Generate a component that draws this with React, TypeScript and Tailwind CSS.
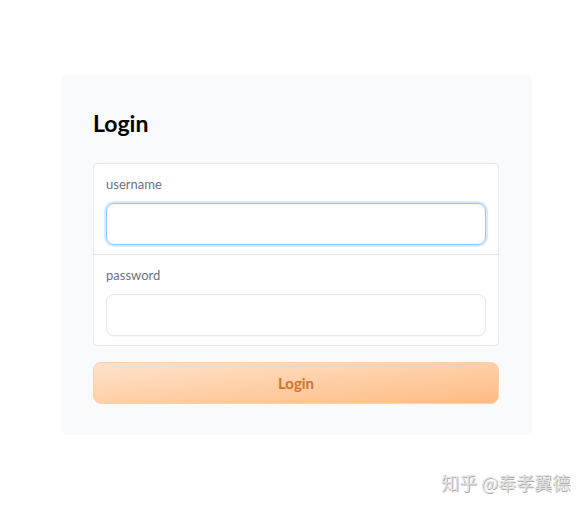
export default function App() {
  return (
    <div
      className="relative w-[584px] h-[507px] bg-white"
      style={{ fontFamily: '"Source Sans Pro", Lato, "Noto Sans", sans-serif' }}
    >
      <div className="pt-[75px] pl-[61px]">
        <div className="w-[471px] h-[360px] rounded-md bg-[#f9fafb] px-8 pt-[31px]">
          <h1 className="text-[23px] font-bold text-black leading-[34px]">Login</h1>
          <div className="mt-[23px] w-[406px] rounded-[4px] border border-[#e5e7eb] bg-white">
            <div className="px-3 pt-[11px] pb-[9px] border-b border-[#e5e7eb]">
              <div className="text-[13px] text-[#6b7280] leading-[18px]">username</div>
              <div className="mt-[10px] h-[42px] rounded-[8px] border border-[#93c5fd] shadow-[0_0_0_2px_#dbeafe] bg-white" />
            </div>
            <div className="px-3 pt-[11px] pb-[9px]">
              <div className="text-[13px] text-[#6b7280] leading-[18px]">password</div>
              <div className="mt-[10px] h-[42px] rounded-[8px] border border-[#e5e7eb] shadow-[0_1px_2px_rgba(0,0,0,0.04)] bg-white" />
            </div>
          </div>
          <button className="mt-4 w-[406px] h-[42px] rounded-[8px] bg-gradient-to-br from-[#ffe3cb] to-[#ffbb82] border border-[#ffd0a8] text-[15px] font-bold text-[#d3732c]">
            Login
          </button>
        </div>
      </div>
      <div
        className="absolute left-[441px] top-[469px] text-[18px] text-[#e2e2e2] [text-shadow:1px_1px_0_#b0b0b0]"
        style={{ fontFamily: '"Noto Sans CJK SC", sans-serif' }}
      >
        知乎 @奉孝翼德
      </div>
    </div>
  );
}
